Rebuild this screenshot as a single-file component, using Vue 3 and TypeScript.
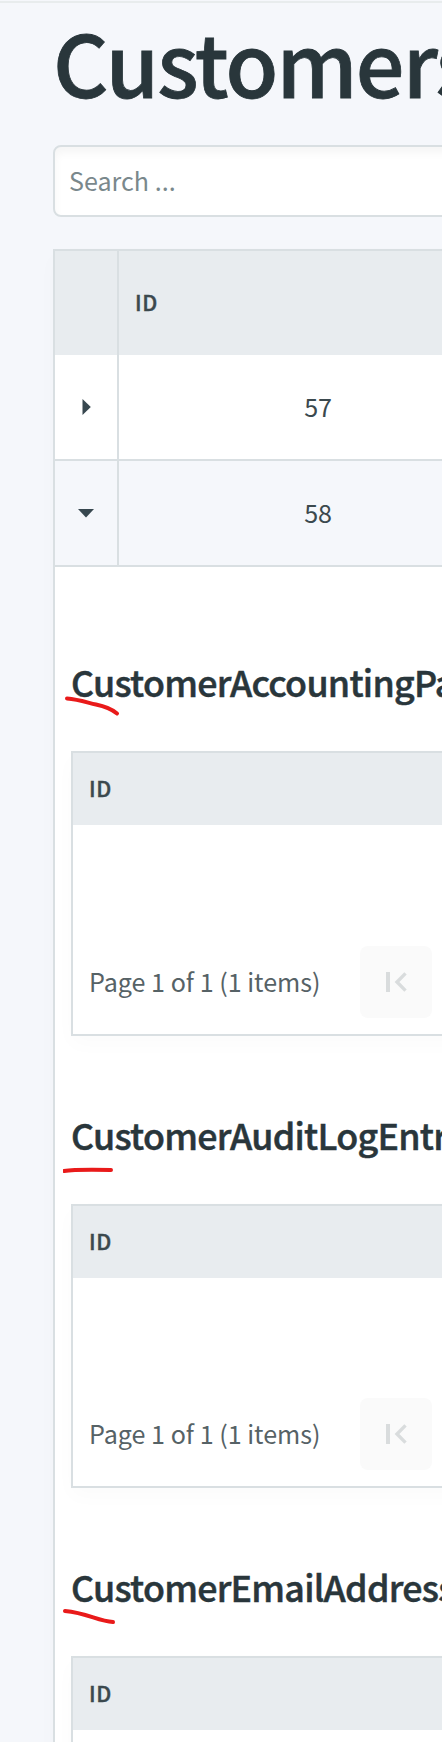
<script setup lang="ts">
interface Row {
  id: number
  open: boolean
}

interface Section {
  title: string
  mark: string
  variant: string
}

const rows: Row[] = [
  { id: 57, open: false },
  { id: 58, open: true },
]

const sections: Section[] = [
  { title: 'CustomerAccountingPartners', mark: 'M4 26.5 C16 27.5 24 30.5 33 32.5 C43 34.5 48 36.5 54 41.5', variant: 'first' },
  { title: 'CustomerAuditLogEntries', mark: 'M1 46 C10 44.6 28 44.6 48 45', variant: 'second' },
  { title: 'CustomerEmailAddresses', mark: 'M2 34 C24 36 35 44 50 45', variant: 'third' },
]
</script>

<template>
  <main class="page">
    <h1 class="title">Customers</h1>
    <input class="search" type="text" placeholder="Search ..." />

    <section class="grid">
      <div class="row head">
        <div class="toggle"></div>
        <div class="label">ID</div>
      </div>
      <div v-for="row in rows" :key="row.id" class="row" :class="{ open: row.open }">
        <div class="toggle">
          <svg v-if="row.open" width="16" height="10" viewBox="0 0 16 10"><path d="M0 1H16L8 9.5Z" fill="#37474f" /></svg>
          <svg v-else class="closed" width="9" height="16" viewBox="0 0 9 16"><path d="M.5 0L8.8 8L.5 16Z" fill="#37474f" /></svg>
        </div>
        <div class="number">{{ row.id }}</div>
      </div>

      <div class="detail">
        <article v-for="s in sections" :key="s.title" class="section" :class="s.variant">
          <h2 class="subtitle">
            {{ s.title }}
            <svg class="mark" width="60" height="54" viewBox="0 0 60 54">
              <path :d="s.mark" fill="none" stroke="#e91a1a" stroke-width="4" stroke-linecap="round" />
            </svg>
          </h2>
          <div class="card">
            <div class="card-head">ID</div>
            <div class="empty"></div>
            <div class="pager">
              <span class="info">Page 1 of 1 (1 items)</span>
              <button class="first-page" type="button" disabled aria-label="First page">
                <svg width="24" height="22" viewBox="0 0 24 22">
                  <path d="M4 1V21" fill="none" stroke="#d9dcdd" stroke-width="4" />
                  <path d="M21.5 2.4L13 11L21.5 19.6" fill="none" stroke="#d9dcdd" stroke-width="3.4" />
                </svg>
              </button>
            </div>
          </div>
        </article>
      </div>
    </section>
  </main>
</template>

<style>
html,
body {
  margin: 0;
  background: #f5f7fb;
}
</style>

<style scoped>
.page {
  box-sizing: border-box;
  width: 442px;
  height: 1742px;
  padding: 9px 0 0 53px;
  overflow: hidden;
  background: linear-gradient(#e8eced, #e8eced) 0 1px / 100% 2px no-repeat #f5f7fb;
  color: #3b494e;
  font-family: "Noto Sans CJK SC", "Noto Sans", sans-serif;
  font-size: 25.1px;
}
.title {
  margin: 0 0 32px;
  height: 104px;
  line-height: 103px;
  font-size: 86px;
  font-weight: 500;
  letter-spacing: -1.85px;
  -webkit-text-stroke: 0.8px currentColor;
  color: #29363b;
  white-space: nowrap;
}
.search {
  display: block;
  box-sizing: border-box;
  width: 800px;
  height: 72px;
  padding: 0 14px 2px;
  border: 2px solid #d9dfe2;
  border-radius: 8px;
  background: #fff;
  box-shadow: inset 0 6px 8px rgba(0, 0, 0, 0.04);
  font: inherit;
  color: #3b494e;
}
.search::placeholder {
  color: #7a888c;
  opacity: 1;
}
.grid {
  width: 800px;
  margin-top: 32px;
  border: 2px solid #d9dfe2;
  box-shadow: 0 8px 20px rgba(0, 0, 0, 0.02);
  background: #fff;
}
.row {
  display: flex;
  height: 104px;
  border-bottom: 2px solid #d9dfe2;
}
.row.head {
  border-bottom: 0;
  background: #e8ecef;
}
.row.open {
  background: #f5f7fb;
}
.toggle {
  display: flex;
  flex: 0 0 62px;
  align-items: center;
  justify-content: center;
  border-right: 2px solid #d9dfe2;
}
.closed {
  margin-left: 1px;
}
.label {
  padding-left: 16px;
  line-height: 102px;
  font-size: 21.5px;
  font-weight: 500;
  letter-spacing: 0.5px;
  -webkit-text-stroke: 0.4px currentColor;
}
.number {
  width: 213px;
  line-height: 102px;
  text-align: right;
}
.detail {
  padding: 90px 16px 0;
}
.section {
  display: flow-root;
}
.subtitle {
  position: relative;
  margin: 0;
  height: 54px;
  line-height: 48px;
  font-size: 35.8px;
  font-weight: 500;
  letter-spacing: -0.75px;
  -webkit-text-stroke: 0.5px currentColor;
  color: #29363b;
  white-space: nowrap;
}
.mark {
  position: absolute;
  left: -8px;
  top: 15px;
}
.card {
  width: 760px;
  margin-top: 40px;
  margin-bottom: 74px;
  border: 2px solid #d9dfe2;
  box-shadow: 0 8px 20px rgba(0, 0, 0, 0.02);
  background: #fff;
}
.card-head {
  height: 72px;
  padding-left: 16px;
  background: #e8ecef;
  line-height: 70px;
  font-size: 21.5px;
  font-weight: 500;
  letter-spacing: 0.5px;
  -webkit-text-stroke: 0.4px currentColor;
}
.empty {
  height: 105px;
}
.second .empty {
  height: 104px;
}
.pager {
  display: flex;
  align-items: center;
  height: 104px;
  padding-left: 16px;
  color: #566266;
}
.info {
  width: 271px;
  padding-bottom: 2px;
  white-space: nowrap;
}
.first-page {
  display: flex;
  align-items: center;
  justify-content: center;
  width: 72px;
  height: 72px;
  padding: 0;
  border: 0;
  border-radius: 8px;
  background: #fafafa;
}
</style>
